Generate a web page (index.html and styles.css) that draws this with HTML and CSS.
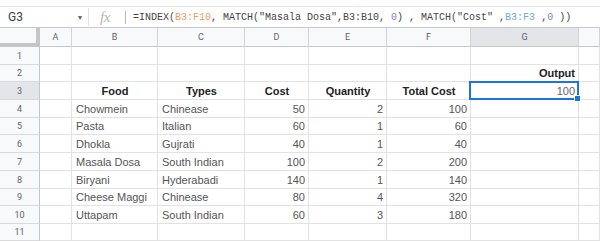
FILE: index.html
```html
<!DOCTYPE html>
<html>
<head>
<meta charset="utf-8">
<link rel="stylesheet" href="styles.css">
</head>
<body>
<div class="top"></div>
<div class="fbar">
  <div class="namebox"><span class="nb-text">G3</span><span class="nb-arrow">&#9662;</span></div>
  <div class="fx">fx</div>
  <div class="fsep"></div>
  <div class="formula">=INDEX(<span class="o">B3:F10</span>, MATCH("Masala Dosa",B3:B10, <span class="p">0</span>) , MATCH("Cost" ,<span class="b">B3:F3</span> ,<span class="p">0</span> ))</div>
</div>
<div class="sheet">
  <div class="corner"></div>
  <div class="ch">A</div><div class="ch">B</div><div class="ch">C</div><div class="ch">D</div><div class="ch">E</div><div class="ch">F</div><div class="ch sel">G</div><div class="ch"></div>

  <div class="rh">1</div><div class="c"></div><div class="c"></div><div class="c"></div><div class="c"></div><div class="c"></div><div class="c"></div><div class="c"></div><div class="c"></div>

  <div class="rh">2</div><div class="c"></div><div class="c"></div><div class="c"></div><div class="c"></div><div class="c"></div><div class="c"></div><div class="c r hd">Output</div><div class="c"></div>

  <div class="rh sel">3</div><div class="c"></div><div class="c m hd">Food</div><div class="c m hd">Types</div><div class="c m hd">Cost</div><div class="c m hd">Quantity</div><div class="c m hd">Total Cost</div><div class="c r active">100</div><div class="c"></div>

  <div class="rh">4</div><div class="c"></div><div class="c">Chowmein</div><div class="c">Chinease</div><div class="c r">50</div><div class="c r">2</div><div class="c r">100</div><div class="c"></div><div class="c"></div>

  <div class="rh">5</div><div class="c"></div><div class="c">Pasta</div><div class="c">Italian</div><div class="c r">60</div><div class="c r">1</div><div class="c r">60</div><div class="c"></div><div class="c"></div>

  <div class="rh">6</div><div class="c"></div><div class="c">Dhokla</div><div class="c">Gujrati</div><div class="c r">40</div><div class="c r">1</div><div class="c r">40</div><div class="c"></div><div class="c"></div>

  <div class="rh">7</div><div class="c"></div><div class="c">Masala Dosa</div><div class="c">South Indian</div><div class="c r">100</div><div class="c r">2</div><div class="c r">200</div><div class="c"></div><div class="c"></div>

  <div class="rh">8</div><div class="c"></div><div class="c">Biryani</div><div class="c">Hyderabadi</div><div class="c r">140</div><div class="c r">1</div><div class="c r">140</div><div class="c"></div><div class="c"></div>

  <div class="rh">9</div><div class="c"></div><div class="c">Cheese Maggi</div><div class="c">Chinease</div><div class="c r">80</div><div class="c r">4</div><div class="c r">320</div><div class="c"></div><div class="c"></div>

  <div class="rh">10</div><div class="c"></div><div class="c">Uttapam</div><div class="c">South Indian</div><div class="c r">60</div><div class="c r">3</div><div class="c r">180</div><div class="c"></div><div class="c"></div>

  <div class="rh">11</div><div class="c"></div><div class="c"></div><div class="c"></div><div class="c"></div><div class="c"></div><div class="c"></div><div class="c"></div><div class="c"></div>
</div>
</body>
</html>
```

FILE: styles.css
```css
* { box-sizing: border-box; }
html, body { margin: 0; padding: 0; background: #fff; }
body { width: 600px; height: 241px; overflow: hidden; font-family: "Liberation Sans", Arial, sans-serif; }

.top { height: 7px; border-bottom: 1px solid #e3e3e3; }

.fbar {
  height: 21px;
  border-bottom: 1px solid #c7c7c7;
  display: flex;
  align-items: center;
}
.namebox {
  width: 89px;
  height: 18px;
  display: flex;
  align-items: center;
  justify-content: space-between;
  padding: 0 6px 0 8px;
  border-right: 1px solid #e0e0e0;
}
.nb-text { font-family: Roboto, "Liberation Sans", sans-serif; font-size: 12px; color: #3c4043; }
.nb-arrow { font-size: 8px; color: #666; }
.fx {
  width: 36px;
  padding-left: 11px;
  font-family: "Liberation Serif", serif;
  font-style: italic;
  font-size: 15px;
  color: #b5b5b5;
  letter-spacing: -0.5px;
}
.fsep { width: 1px; height: 13px; background: #b8b8b8; }
.formula {
  padding-left: 7px;
  font-family: "Liberation Mono", "DejaVu Sans Mono", monospace;
  font-size: 10px;
  color: #444;
  white-space: pre;
}
.formula .o { color: #f19a62; }
.formula .p { color: #8e7cc3; }
.formula .b { color: #6fa8dc; }

.sheet {
  display: grid;
  grid-template-columns: 40px 32px 86px 87px 64px 78px 84px 108px 21px;
  grid-template-rows: 19px 18px 17px 18px 18px 17px 18px 18px 18px 17px 18px 17px;
}

.corner {
  background: #f8f9fa;
  border-right: 4px solid #c4c7c5;
  border-bottom: 4px solid #c4c7c5;
}
.ch {
  background: #f8f9fa;
  border-right: 1px solid #d4d4d4;
  border-bottom: 1px solid #c4c7c5;
  display: flex;
  align-items: center;
  justify-content: center;
  font-family: Roboto, "Liberation Sans", sans-serif;
  font-size: 9px;
  color: #5f6368;
}
.rh {
  background: #f8f9fa;
  border-right: 1px solid #c4c7c5;
  border-bottom: 1px solid #dadada;
  display: flex;
  align-items: center;
  justify-content: center;
  font-family: Roboto, "Liberation Sans", sans-serif;
  font-size: 9px;
  color: #5f6368;
}
.sel { background: #e3e5e8; }

.c {
  border-right: 1px solid #e2e2e2;
  border-bottom: 1px solid #e2e2e2;
  display: flex;
  align-items: flex-end;
  padding: 0 3px 1px 4px;
  font-size: 11px;
  line-height: 13px;
  color: #555;
  white-space: nowrap;
}
.r { justify-content: flex-end; }
.m { justify-content: center; }
.hd { font-weight: bold; color: #222; }

.active { position: relative; color: #666; }
.active::after {
  content: "";
  position: absolute;
  left: -2px;
  top: -1px;
  right: -1px;
  bottom: -1px;
  border: 2px solid #1a73e8;
}
.active::before {
  content: "";
  position: absolute;
  right: -3px;
  bottom: -3px;
  width: 5px;
  height: 5px;
  background: #1a73e8;
  border: 1px solid #fff;
  z-index: 2;
  box-sizing: content-box;
}
```
